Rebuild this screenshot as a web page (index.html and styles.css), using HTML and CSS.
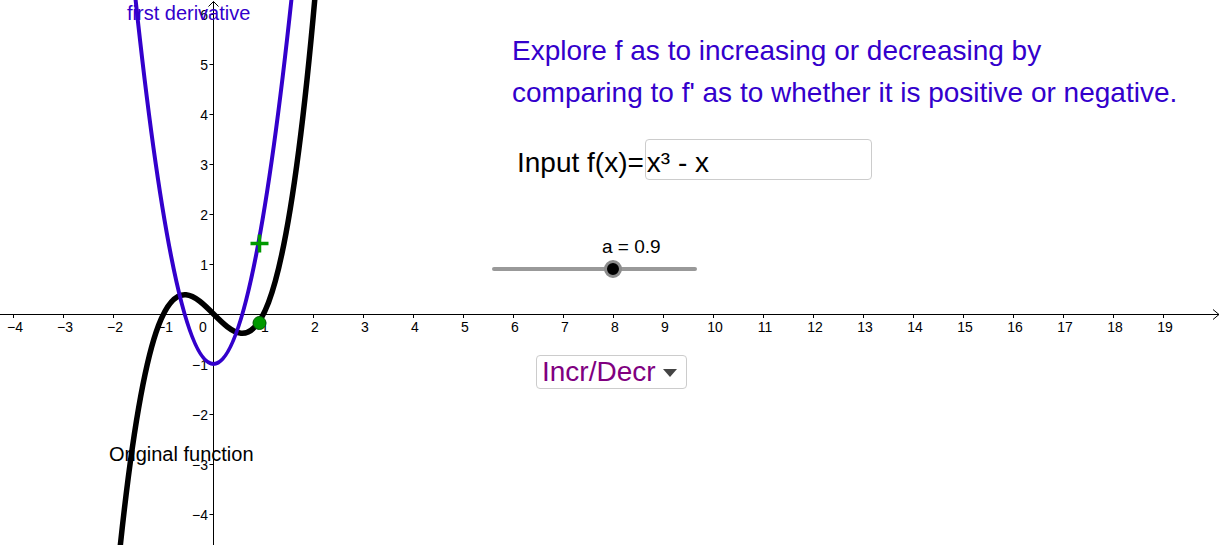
FILE: index.html
```html
<!DOCTYPE html>
<html>
<head>
<meta charset="utf-8">
<link rel="stylesheet" href="styles.css">
</head>
<body>
<div class="canvas">
  <svg class="graph" width="1222" height="545" viewBox="0 0 1222 545">
    <g class="axes">
      <path d="M0 314.5H1219M1213 309.5L1219 314.5L1213 319.5"/>
      <path d="M213.5 545V1.5M208.5 6.5L213.5 1.5L218.5 6.5"/>
      <path d="M13.5 314v4M63.5 314v4M113.5 314v4M163.5 314v4M263.5 314v4M313.5 314v4M363.5 314v4M413.5 314v4M463.5 314v4M513.5 314v4M563.5 314v4M613.5 314v4M663.5 314v4M713.5 314v4M763.5 314v4M813.5 314v4M863.5 314v4M913.5 314v4M963.5 314v4M1013.5 314v4M1063.5 314v4M1113.5 314v4M1163.5 314v4"/>
      <path d="M209.5 14.5h4M209.5 64.5h4M209.5 114.5h4M209.5 164.5h4M209.5 214.5h4M209.5 264.5h4M209.5 364.5h4M209.5 414.5h4M209.5 464.5h4M209.5 514.5h4"/>
    </g>
    <g class="tick xtick">
      <text x="15" y="332">−4</text>
      <text x="65" y="332">−3</text>
      <text x="115" y="332">−2</text>
      <text x="165" y="332">−1</text>
      <text x="203" y="332">0</text>
      <text x="265" y="332">1</text>
      <text x="315" y="332">2</text>
      <text x="365" y="332">3</text>
      <text x="415" y="332">4</text>
      <text x="465" y="332">5</text>
      <text x="515" y="332">6</text>
      <text x="565" y="332">7</text>
      <text x="615" y="332">8</text>
      <text x="665" y="332">9</text>
      <text x="715" y="332">10</text>
      <text x="765" y="332">11</text>
      <text x="815" y="332">12</text>
      <text x="865" y="332">13</text>
      <text x="915" y="332">14</text>
      <text x="965" y="332">15</text>
      <text x="1015" y="332">16</text>
      <text x="1065" y="332">17</text>
      <text x="1115" y="332">18</text>
      <text x="1165" y="332">19</text>
    </g>
    <g class="tick ytick">
      <text x="208" y="19.5">6</text>
      <text x="208" y="69.5">5</text>
      <text x="208" y="119.5">4</text>
      <text x="208" y="169.5">3</text>
      <text x="208" y="219.5">2</text>
      <text x="208" y="269.5">1</text>
      <text x="208" y="369.5">−1</text>
      <text x="208" y="419.5">−2</text>
      <text x="208" y="469.5">−3</text>
      <text x="208" y="519.5">−4</text>
    </g>
    <text class="caption deriv" x="127" y="20">first derivative</text>
    <text class="caption orig" x="109" y="461">Original function</text>
    <path class="curve-f" d="M103.5 736.4C176.833 -255.07 250.167 883.07 323.5 -108.4"/>
    <path class="curve-fp" d="M128.5 -69.5Q213.5 797.5 298.5 -69.5"/>
    <path class="plus" d="M250.5 243.5h18M259.5 234.5v18"/>
    <circle class="point" cx="259.5" cy="323" r="6.5"/>
  </svg>

  <div class="prompt">Explore f as to increasing or decreasing by<br>comparing to f' as to whether it is positive or negative.</div>

  <div class="input-row">
    <span class="input-label">Input f(x)=</span>
    <div class="input-box">x³ - x</div>
  </div>

  <div class="slider">
    <div class="slider-label">a = 0.9</div>
    <div class="track"><div class="knob"></div></div>
  </div>

  <div class="dropdown">
    <span class="dropdown-text">Incr/Decr</span>
    <span class="caret"></span>
  </div>
</div>
</body>
</html>
```

FILE: styles.css
```css
html, body {
  margin: 0;
  padding: 0;
  background: #ffffff;
}

body {
  font-family: "Liberation Sans", Arial, sans-serif;
}

.canvas {
  position: relative;
  width: 1222px;
  height: 545px;
  overflow: hidden;
  background: #ffffff;
}

.graph {
  position: absolute;
  left: 0;
  top: 0;
  display: block;
}

.axes path {
  fill: none;
  stroke: #000000;
  stroke-width: 1;
}

.tick {
  font-family: "Liberation Sans", Arial, sans-serif;
  font-size: 14px;
  fill: #000000;
}

.xtick text {
  text-anchor: middle;
}

.ytick text {
  text-anchor: end;
}

.caption {
  font-family: "Liberation Sans", Arial, sans-serif;
  font-size: 20px;
}

.deriv {
  fill: #3300cc;
}

.orig {
  fill: #000000;
}

.curve-f {
  fill: none;
  stroke: #000000;
  stroke-width: 5.5;
}

.curve-fp {
  fill: none;
  stroke: #3300cc;
  stroke-width: 4;
}

.plus {
  fill: none;
  stroke: #009900;
  stroke-width: 3.5;
}

.point {
  fill: #009900;
  stroke: #005a00;
  stroke-width: 1;
}

.prompt {
  position: absolute;
  left: 512px;
  top: 30px;
  font-size: 28px;
  line-height: 42px;
  color: #3300cc;
  white-space: nowrap;
}

.input-row {
  position: absolute;
  left: 517px;
  top: 139px;
  display: flex;
  align-items: baseline;
  gap: 1px;
}

.input-label {
  font-size: 28px;
  color: #000000;
}

.input-box {
  box-sizing: border-box;
  width: 227px;
  height: 41px;
  padding: 5px 0 0 1px;
  line-height: 35px;
  font-size: 28px;
  color: #000000;
  border: 1px solid #cccccc;
  border-radius: 4px;
}

.slider {
  position: absolute;
  left: 492px;
  top: 236px;
  display: flex;
  flex-direction: column;
}

.slider-label {
  margin-left: 110px;
  font-size: 19px;
  line-height: 22px;
  color: #000000;
}

.track {
  position: relative;
  margin-top: 9px;
  width: 205px;
  height: 4px;
  border-radius: 2px;
  background: #999999;
}

.knob {
  position: absolute;
  left: 112px;
  top: -7px;
  width: 12px;
  height: 12px;
  border-radius: 50%;
  background: #000000;
  border: 3px solid #8c8c8c;
}

.dropdown {
  position: absolute;
  left: 536px;
  top: 355px;
  box-sizing: border-box;
  width: 151px;
  height: 34px;
  display: flex;
  align-items: center;
  padding-left: 5px;
  border: 1px solid #cccccc;
  border-radius: 4px;
}

.dropdown-text {
  font-size: 28px;
  line-height: 32px;
  color: #800080;
}

.caret {
  margin-left: 7px;
  margin-top: 2px;
  width: 0;
  height: 0;
  border-left: 7.5px solid transparent;
  border-right: 7.5px solid transparent;
  border-top: 8px solid #444444;
}
```
